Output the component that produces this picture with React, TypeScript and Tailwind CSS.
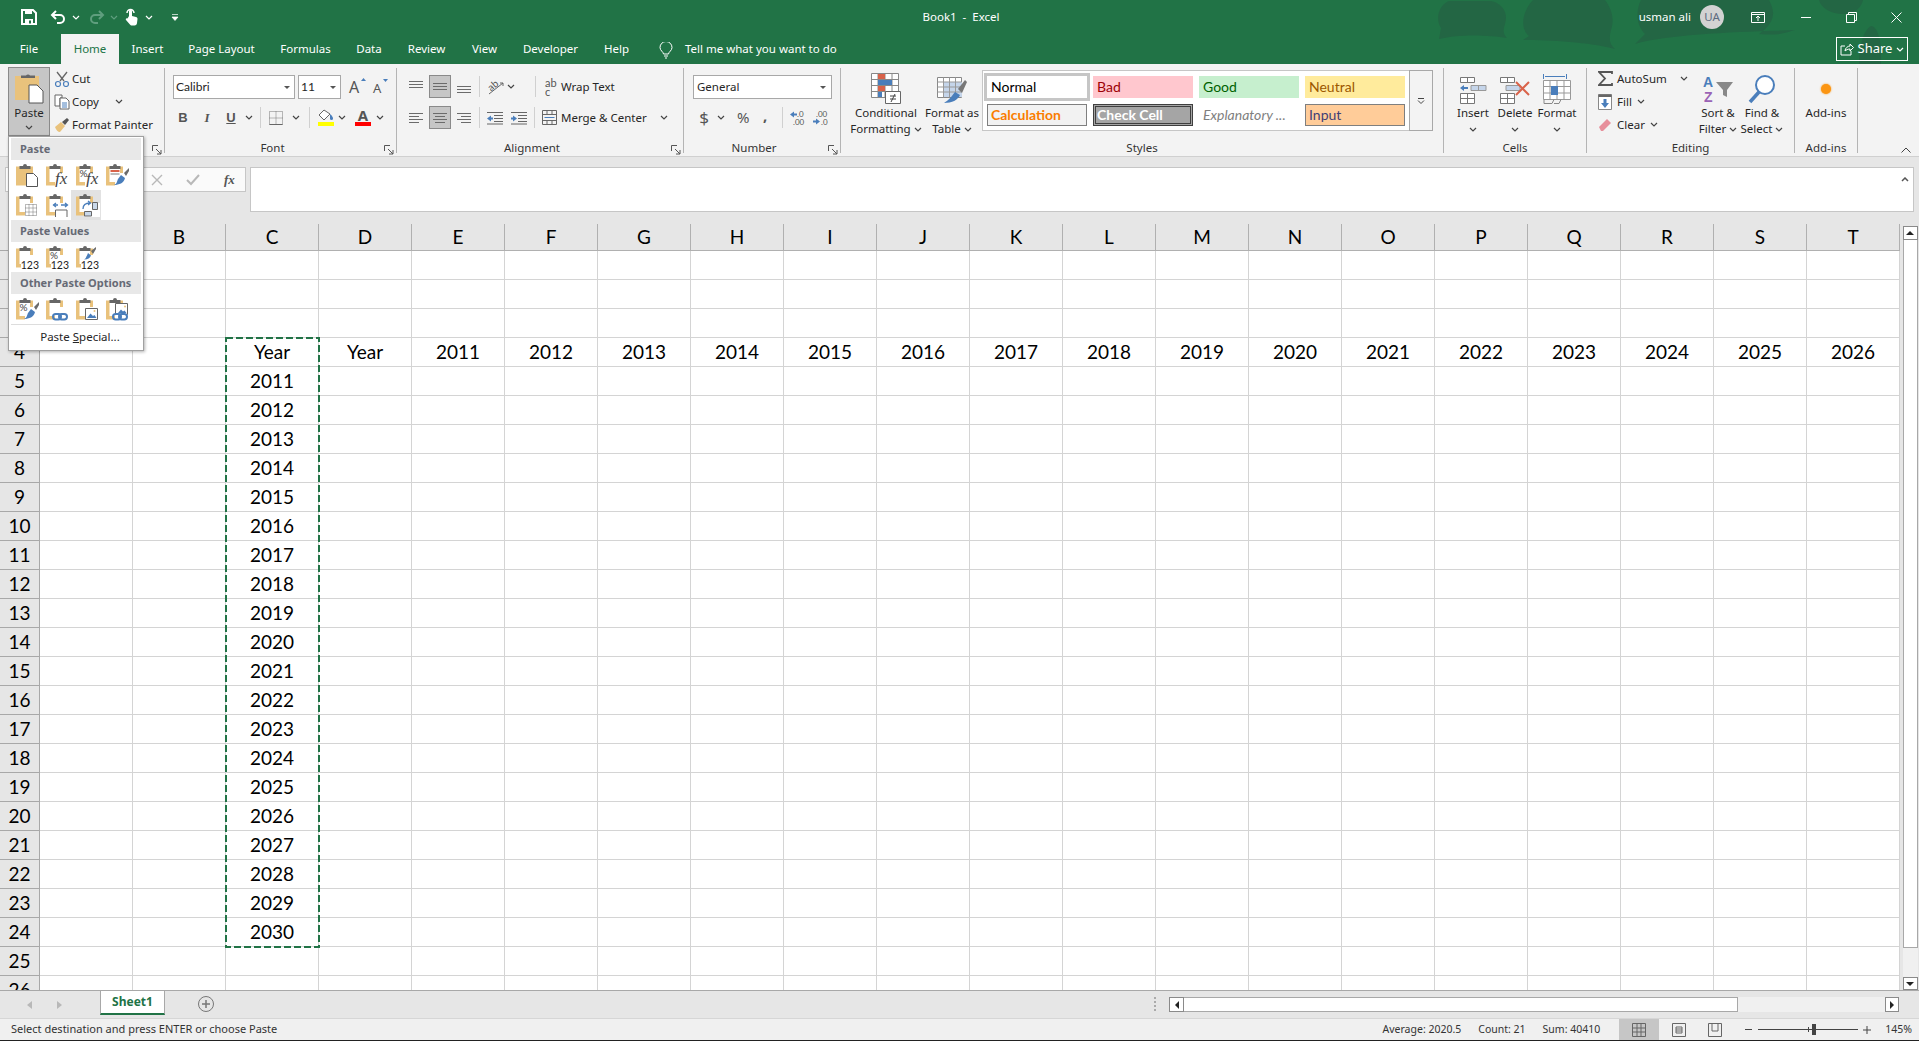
import type { ReactNode } from "react";

const GRAY = "#666666";
const BLUE = "#4a7ebb";
const TAN = "#e9c27c";
const RED = "#d9634a";

const columns = "ABCDEFGHIJKLMNOPQRST".split("");
const rows = Array.from({ length: 26 }, (_, i) => i + 1);

// what sits in the sheet, keyed by column + row
const cellValues: Record<string, string> = { C4: "Year", D4: "Year" };
columns.slice(4).forEach((col, i) => {
  cellValues[`${col}4`] = String(2011 + i);
});
for (let i = 0; i < 20; i++) {
  cellValues[`C${5 + i}`] = String(2011 + i);
}

const Chevron = ({ className = "", color = "#444444" }: { className?: string; color?: string }) => (
  <svg width="8" height="5" viewBox="0 0 8 5" className={`shrink-0 ${className}`}>
    <path d="M1 1l3 3 3-3" fill="none" stroke={color} strokeWidth="1.2" />
  </svg>
);

const Launcher = () => (
  <svg width="10" height="10" viewBox="0 0 10 10">
    <path d="M.5 6V.5H6M4 4l5 5M9 5v4H5" fill="none" stroke="#555555" />
  </svg>
);

const Sep = ({ className = "" }: { className?: string }) => (
  <div className={`w-px h-[21px] bg-[#d0d0d0] shrink-0 ${className}`} />
);

const Group = ({
  className,
  label,
  launcher,
  children,
}: {
  className: string;
  label: string;
  launcher?: boolean;
  children: ReactNode;
}) => (
  <div className={`flex flex-col h-[85px] border-r border-[#b4b4b4] shrink-0 ${className}`}>
    <div className="h-[73px] shrink-0">{children}</div>
    <div
      className={`relative h-[13px] shrink-0 flex items-center justify-center text-[11.5px] leading-none text-[#333333] ${
        launcher ? "pr-[16px]" : ""
      }`}
    >
      {label}
      {launcher && (
        <span className="absolute right-[2px] bottom-[-1px]">
          <Launcher />
        </span>
      )}
    </div>
  </div>
);

const BigButton = ({
  className,
  icon,
  lines,
  chevronBelow,
}: {
  className: string;
  icon: ReactNode;
  lines: string[];
  chevronBelow?: boolean;
}) => (
  <div className={`flex flex-col items-center shrink-0 pt-1 ${className}`}>
    <div className="h-[33px] flex items-center justify-center">{icon}</div>
    {lines.map((line, i) => (
      <div key={line} className="h-[16px] leading-[16px] whitespace-nowrap flex items-center gap-[3px] text-[11.5px]">
        {line}
        {!chevronBelow && i === lines.length - 1 && lines.length > 1 && <Chevron />}
      </div>
    ))}
    {chevronBelow && (
      <div className="h-[16px] flex items-center">
        <Chevron />
      </div>
    )}
  </div>
);

const LinesIcon = ({ d }: { d: string }) => (
  <svg width="16" height="14" viewBox="0 0 16 14">
    <path d={d} fill="none" stroke="#6b6b6b" />
  </svg>
);

const AlignCell = ({ d, on }: { d: string; on?: boolean }) => (
  <div className="w-[24px] h-[23px] flex items-center justify-center">
    <div
      className={`w-[22px] h-[23px] flex items-center justify-center border ${
        on ? "bg-[#c6c6c6] border-[#8a8a8a]" : "border-transparent"
      }`}
    >
      <LinesIcon d={d} />
    </div>
  </div>
);

const StyleCell = ({ className, children }: { className: string; children: ReactNode }) => (
  <div className={`h-[22px] flex items-center pb-[2px] text-[14px] whitespace-nowrap font-['Lato',sans-serif] ${className}`}>
    {children}
  </div>
);

// clipboard base used by every entry of the paste menu
const Clip = ({ solid, children }: { solid?: boolean; children?: ReactNode }) => (
  <svg width="24" height="24" viewBox="0 0 24 24" className="ml-[4px]">
    <path d="M0 3.500h17v19H0z" fill={TAN} />
    {!solid && <path d="M3.500 6h10.500v13H3.500z" fill="#ffffff" />}
    {!solid && <path d="M9 10h15v14H9z" fill="#ffffff" />}
    <path d="M3.500 6V3h3.500a2 2 0 0 1 4 0h3.500v3z" fill={GRAY} />
    {children}
  </svg>
);

const Page = () => <path d="M10.500 10.500h7l4 4v9H10.500z" fill="#ffffff" stroke="#555555" />;
const Brush = () => (
  <g>
    <path d="M18 10l5-5v3l-3 5z" fill="#6b6b6b" />
    <path d="M15 12l4 3c-1 5-6 7-11 7 3-1 3-4 4-6z" fill={BLUE} />
  </g>
);
const LinkIcon = () => (
  <g fill="none" stroke={BLUE} strokeWidth="2">
    <rect x="7" y="17" width="8" height="5.500" rx="2.700" />
    <rect x="13" y="17" width="8" height="5.500" rx="2.700" />
  </g>
);
const Picture = () => (
  <g>
    <path d="M9.500 11.500h12v11h-12z" fill="#ffffff" stroke="#666666" />
    <path d="M11 21l3.500-4.500 2.500 2.500 1.500-1 2 3z" fill={BLUE} />
    <circle cx="18.500" cy="14" r="1" fill={TAN} />
  </g>
);
const Num = () => (
  <g>
    <path d="M5 15h19v9H5z" fill="#ffffff" />
    <text x="23" y="23.500" textAnchor="end" fontSize="10.500" fontFamily="Lato, sans-serif" fill="#222222">
      123
    </text>
  </g>
);
const Fx = ({ x = 9 }: { x?: number }) => (
  <text x={x} y="21" fontSize="17" fontStyle="italic" fontFamily="Liberation Serif, serif" fill="#444444">
    fx
  </text>
);

const pasteRow1: ReactNode[] = [
  <Clip solid key="p"><Page /></Clip>,
  <Clip key="f"><Fx /></Clip>,
  <Clip key="pf">
    <text x="3.500" y="14" fontSize="10" fontFamily="Lato, sans-serif" fill="#444444">%</text>
    <Fx x={10} />
  </Clip>,
  <Clip key="fb">
    <path d="M4.500 7h9v2h-9z" fill="#d9634a" />
    <path d="M4.500 10h9v2h-9z" fill="#bbbbbb" />
    <Brush />
  </Clip>,
];

const pasteRow2: ReactNode[] = [
  <Clip key="nb">
    <path d="M9.500 11.500h11v11h-11zM13 11.500v11M17 11.500v11M9.500 15h11M9.500 19h11" fill="#ffffff" stroke="#777777" strokeDasharray="1 1" />
  </Clip>,
  <Clip key="kw">
    <path d="M7 12h5m-2-2l-2.500 2 2.500 2M15 12h6m-2-2l2.500 2-2.500 2" fill="none" stroke={BLUE} strokeWidth="1.300" />
    <path d="M9.500 24v-7h11.500v7" fill="#ffffff" stroke="#666666" />
  </Clip>,
  <Clip key="tr">
    <path d="M16.500 9.500h5v7h-5z" fill="#c9d8ea" stroke="#666666" />
    <path d="M8.500 18.500h7v4.500h-7z" fill="#c9d8ea" stroke="#666666" />
    <path d="M7 16c0-4 3-6 7-6m-2-2l2.500 2-2.500 2" fill="none" stroke={BLUE} strokeWidth="1.300" />
  </Clip>,
];

const pasteValues: ReactNode[] = [
  <Clip key="v"><Num /></Clip>,
  <Clip key="vp">
    <text x="4" y="14" fontSize="10" fontFamily="Lato, sans-serif" fill="#444444">%</text>
    <Num />
  </Clip>,
  <Clip key="vb">
    <path d="M15 6l5-4v2l-3 5z" fill="#6b6b6b" />
    <path d="M12 8l3 2.500c-1 2.500-3 4-7 4 2-1 2-2.500 3-4z" fill={BLUE} />
    <Num />
  </Clip>,
];

const pasteOther: ReactNode[] = [
  <Clip key="o1">
    <text x="3.500" y="14" fontSize="10" fontFamily="Lato, sans-serif" fill="#444444">%</text>
    <Brush />
  </Clip>,
  <Clip key="o2"><LinkIcon /></Clip>,
  <Clip key="o3"><Picture /></Clip>,
  <Clip key="o4">
    <path d="M9.500 6.500h12v11h-12z" fill="#ffffff" stroke="#666666" />
    <path d="M12 16l3-3.500 2 2 1.500-1 2 2.500z" fill={BLUE} />
    <circle cx="19" cy="9.500" r="1" fill={TAN} />
    <LinkIcon />
  </Clip>,
];

const MenuHeader = ({ children }: { children: ReactNode }) => (
  <div className="h-[22px] mx-[2px] bg-[#e8e8e8] flex items-center pl-[9px] text-[11px] font-bold text-[#666a75] whitespace-nowrap">
    {children}
  </div>
);

const MenuRow = ({ icons, selected }: { icons: ReactNode[]; selected?: number }) => (
  <div className="flex h-[30px] mx-[2px]">
    {icons.map((icon, i) => (
      <div key={i} className={`w-[30px] h-[30px] flex items-center justify-center ${selected === i ? "bg-[#e2e2e2]" : ""}`}>
        {icon}
      </div>
    ))}
  </div>
);

const PasteMenu = () => (
  <div className="absolute left-[8px] top-[136px] w-[136px] h-[215px] z-20 bg-white border border-[#a0a0a0] shadow-[1px_1px_3px_rgba(0,0,0,0.3)] pt-[1px] text-[#262626]">
    <MenuHeader>Paste</MenuHeader>
    <MenuRow icons={pasteRow1} />
    <MenuRow icons={pasteRow2} selected={2} />
    <MenuHeader>Paste Values</MenuHeader>
    <MenuRow icons={pasteValues} />
    <MenuHeader>Other Paste Options</MenuHeader>
    <MenuRow icons={pasteOther} />
    <div className="h-px mx-[2px] bg-[#dddddd]" />
    <div className="h-[24px] flex items-center justify-center pl-[8px] text-[11.5px]">
      <span>
        Paste <span className="underline">S</span>pecial...
      </span>
    </div>
  </div>
);

const TitleBar = () => (
  <div className="relative h-[34px] grid grid-cols-[1fr_auto_1fr] items-center text-white">
    <div className="relative flex items-center h-full">
      <svg width="16" height="16" viewBox="0 0 16 16" className="ml-[21px]">
        <path d="M1 1h11l3 3v11H1z" fill="none" stroke="#fff" strokeWidth="2" />
        <path d="M4 1h7v4H4zM4 10h8v5H4z" fill="#fff" />
        <path d="M8 11.500h2v3H8z" fill="#217346" />
      </svg>
      <svg width="16" height="14" viewBox="0 0 16 14" className="ml-[13px]">
        <path d="M6 1L2 5l4 4M2 5h8a4 4 0 0 1 0 8H7" fill="none" stroke="#fff" strokeWidth="2" />
      </svg>
      <Chevron color="#ffffff" className="ml-[6px]" />
      <svg width="16" height="14" viewBox="0 0 16 14" className="ml-[9px]">
        <path d="M10 1l4 4-4 4M14 5H6a4 4 0 0 0 0 8h3" fill="none" stroke="#5f9e7e" strokeWidth="2" />
      </svg>
      <Chevron color="#5f9e7e" className="ml-[5px]" />
      <svg width="13" height="18" viewBox="0 0 13 18" className="ml-[7px]">
        <path d="M4 8V3a1.500 1.500 0 0 1 3 0v5l4 1c1 .3 1.500 1 1.500 2l-.5 4c-.1 1.500-1 2.500-2.500 2.500H7c-1 0-1.700-.5-2.300-1.300L1 12c-.7-1 .5-2.300 1.500-1.500z" fill="#fff" />
        <path d="M2 5a3.500 3.500 0 0 1 7 0" fill="none" stroke="#fff" strokeWidth="1.500" />
      </svg>
      <Chevron color="#ffffff" className="ml-[7px]" />
      <svg width="8" height="7" viewBox="0 0 8 7" className="ml-[18px]">
        <path d="M1 .5h6M1 3h6L4 6.500z" fill="#fff" stroke="#fff" strokeWidth="0.700" />
      </svg>
    </div>
    <div className="text-[11.5px] whitespace-pre pl-[3px]">Book1  -  Excel</div>
    <div className="relative flex items-center justify-end h-full">
      <span className="text-[11.5px]">usman ali</span>
      <div className="ml-[9px] w-[24px] h-[24px] rounded-full bg-[#d2d2d2] flex items-center justify-center text-[11.5px] text-[#5d6b80]">
        UA
      </div>
      <svg width="14" height="11" viewBox="0 0 14 11" className="ml-[27px]">
        <path d="M.5 .5h13v10H.5zM.5 2.500h13M7 9V4.500M5 6l2-2 2 2" fill="none" stroke="#fff" />
      </svg>
      <div className="ml-[36px] w-[10px] h-px bg-white" />
      <svg width="11" height="11" viewBox="0 0 11 11" className="ml-[35px]">
        <path d="M.5 2.500h8v8h-8zM2.500 2.500v-2h8v8h-2" fill="none" stroke="#fff" />
      </svg>
      <svg width="11" height="11" viewBox="0 0 11 11" className="ml-[34px] mr-[17px]">
        <path d="M.5 .5l10 10M10.500 .5l-10 10" fill="none" stroke="#fff" />
      </svg>
    </div>
  </div>
);

const tabs = [
  { label: "File", cls: "w-[58px] mr-[3px]" },
  { label: "Home", cls: "w-[58px] bg-[#f3f3f3] text-[#217346]" },
  { label: "Insert", cls: "w-[57px]" },
  { label: "Page Layout", cls: "w-[91px]" },
  { label: "Formulas", cls: "w-[77px]" },
  { label: "Data", cls: "w-[50px]" },
  { label: "Review", cls: "w-[65px]" },
  { label: "View", cls: "w-[51px]" },
  { label: "Developer", cls: "w-[81px]" },
  { label: "Help", cls: "w-[51px]" },
];

const TabRow = () => (
  <div className="relative h-[30px] flex text-white text-[11.5px]">
    {tabs.map((t) => (
      <div key={t.label} className={`h-full flex items-center justify-center ${t.cls}`}>
        {t.label}
      </div>
    ))}
    <svg width="14" height="17" viewBox="0 0 14 17" className="ml-[17px] mt-[8px]">
      <path d="M4.500 12c0-2-3.500-3.500-3.500-6.500a6 6 0 0 1 12 0C13 8.500 9.500 10 9.500 12zM5 14h4M6 16h2" fill="none" stroke="#fff" />
    </svg>
    <div className="ml-[12px] flex items-center">Tell me what you want to do</div>
    <div className="absolute right-[11px] top-[3px] w-[72px] h-[24px] border border-white flex items-center justify-center gap-[4px] text-[13px]">
      <svg width="14" height="14" viewBox="0 0 14 14">
        <path d="M5 4H1v9h10V9M5 9c0-3 3-5 5-5V2l3.500 3.500L10 9V7C8 7 6 8 5 9z" fill="none" stroke="#fff" />
      </svg>
      Share
      <Chevron color="#ffffff" />
    </div>
  </div>
);

const Clipboard = () => (
  <Group className="w-[165px]" label="" launcher>
    <div className="flex pl-[8px] -mt-[1px]">
      <div className="w-[42px] h-[69px] bg-[#c6c6c6] border border-[#8a8a8a] flex flex-col items-center pt-[4px]">
        <svg width="30" height="32" viewBox="0 0 30 32">
          <path d="M1 4h24v24H1z" fill={TAN} />
          <path d="M7 6V3.500h5a2.500 2.500 0 0 1 4 0h5V6z" fill={GRAY} />
          <path d="M15 13h8l6 6v12H15z" fill="#ffffff" stroke="#555555" />
        </svg>
        <div className="text-[11.5px] leading-[16px] mt-[1px]">Paste</div>
        <Chevron className="mt-[4px]" />
      </div>
      <div className="ml-[4px] flex flex-col text-[11.5px]">
        <div className="h-[23px] flex items-center gap-[2px]">
          <svg width="16" height="16" viewBox="0 0 16 16">
            <path d="M3 1l7 9M13 1L6 10" fill="none" stroke="#666" strokeWidth="1.300" />
            <circle cx="4" cy="13" r="2.500" fill="none" stroke={BLUE} strokeWidth="1.200" />
            <circle cx="12" cy="13" r="2.500" fill="none" stroke={BLUE} strokeWidth="1.200" />
          </svg>
          Cut
        </div>
        <div className="h-[23px] flex items-center gap-[2px]">
          <svg width="16" height="16" viewBox="0 0 16 16">
            <path d="M1 1h7v3h-2v8H1z" fill="#fff" stroke="#666" />
            <path d="M6 4h6l3 3v8H6z" fill="#fff" stroke="#666" />
            <path d="M8 9h5M8 11h5M8 13h5" stroke={BLUE} />
          </svg>
          Copy
          <Chevron className="ml-[14px]" />
        </div>
        <div className="h-[23px] flex items-center gap-[2px]">
          <svg width="16" height="16" viewBox="0 0 16 16">
            <path d="M1 10l6-5 4 4-5 6c-2 0-4-2-5-5z" fill={TAN} />
            <path d="M8 5l5-4 2 2-4 5z" fill="#555" />
          </svg>
          Format Painter
        </div>
      </div>
    </div>
  </Group>
);

const FontGroup = () => (
  <Group className="w-[232px]" label="Font" launcher>
    <div className="flex items-center pl-[8px] pt-[7px]">
      <div className="w-[122px] h-[24px] bg-white border border-[#a8a8a8] flex items-center justify-between pl-[2px] pr-[4px] font-['Lato',sans-serif] text-[12px]">
        Calibri
        <svg width="6" height="3" viewBox="0 0 6 3"><path d="M0 0h6L3 3z" fill="#555" /></svg>
      </div>
      <div className="ml-[3px] w-[43px] h-[24px] bg-white border border-[#a8a8a8] flex items-center justify-between pl-[2px] pr-[4px] font-['Lato',sans-serif] text-[12px]">
        11
        <svg width="6" height="3" viewBox="0 0 6 3"><path d="M0 0h6L3 3z" fill="#555" /></svg>
      </div>
      <div className="ml-[8px] w-[14px] relative text-[16px] text-[#555555] leading-none">
        A
        <svg width="5" height="3" viewBox="0 0 5 3" className="absolute right-[-3px] top-[-1px]"><path d="M0 3h5L2.500 0z" fill={BLUE} /></svg>
      </div>
      <div className="ml-[10px] w-[12px] relative text-[13px] text-[#555555] leading-none mt-[2px]">
        A
        <svg width="5" height="3" viewBox="0 0 5 3" className="absolute right-[-3px] top-[-3px]"><path d="M0 0h5L2.500 3z" fill={BLUE} /></svg>
      </div>
    </div>
    <div className="flex items-center pl-[6px] mt-[8px] h-[21px] text-[#555555] text-[13px]">
      <div className="w-[24px] text-center font-bold font-['Liberation_Sans',sans-serif]">B</div>
      <div className="w-[24px] text-center italic font-['Liberation_Serif',serif] font-bold">I</div>
      <div className="w-[24px] text-center font-bold underline font-['Liberation_Sans',sans-serif]">U</div>
      <Chevron className="ml-[2px]" />
      <Sep className="ml-[7px]" />
      <svg width="14" height="14" viewBox="0 0 14 14" className="ml-[8px]">
        <path d="M.5 .5h13v13H.5zM7 .5v13M.5 7h13" fill="none" stroke="#777" strokeDasharray="1 1" />
        <path d="M.5 13.500h13" stroke="#666" />
      </svg>
      <Chevron className="ml-[9px]" />
      <Sep className="ml-[9px]" />
      <div className="ml-[8px] w-[16px] flex flex-col items-center">
        <svg width="16" height="13" viewBox="0 0 16 13">
          <path d="M6 1L1 6l5 5 6-6z" fill="#fff" stroke="#666" />
          <path d="M12 5c2 2 3 3 3 4.500a1.500 1.500 0 0 1-3 0z" fill={BLUE} />
        </svg>
        <div className="w-[16px] h-[4px] bg-[#ffff00]" />
      </div>
      <Chevron className="ml-[4px]" />
      <div className="ml-[9px] w-[16px] flex flex-col items-center leading-none text-[15px] font-bold">
        <span className="h-[13px] leading-[13px]">A</span>
        <div className="w-[16px] h-[4px] bg-[#ff0000]" />
      </div>
      <Chevron className="ml-[5px]" />
    </div>
  </Group>
);

const AlignmentGroup = () => (
  <Group className="w-[287px]" label="Alignment" launcher>
    <div className="flex items-center h-[23px] mt-[7px] pl-[7px]">
      <AlignCell d="M1 1.500h14M1 4.500h14M1 7.500h14" />
      <AlignCell on d="M1 3.500h14M1 6.500h14M1 9.500h14" />
      <AlignCell d="M1 6.500h14M1 9.500h14M1 12.500h14" />
      <Sep className="ml-[3px]" />
      <svg width="18" height="18" viewBox="0 0 18 18" className="ml-[7px]">
        <path d="M2 16L16 5m-3 0h3v3" fill="none" stroke="#666" />
        <text x="1" y="11" fontSize="10" transform="rotate(-40 6 8)" fill="#555" fontFamily="Lato, sans-serif">ab</text>
      </svg>
      <Chevron className="ml-[2px]" />
      <Sep className="ml-[20px]" />
      <div className="ml-[9px] w-[13px] text-[11px] leading-[9px] text-[#555555] font-['Lato',sans-serif]">
        ab
        <br />c
      </div>
      <span className="ml-[3px] text-[11.5px]">Wrap Text</span>
    </div>
    <div className="flex items-center h-[23px] mt-[8px] pl-[7px]">
      <AlignCell d="M1 2.500h14M1 5.500h10M1 8.500h14M1 11.500h10" />
      <AlignCell on d="M1 2.500h14M3 5.500h10M1 8.500h14M3 11.500h10" />
      <AlignCell d="M1 2.500h14M5 5.500h10M1 8.500h14M5 11.500h10" />
      <Sep className="ml-[3px]" />
      <svg width="16" height="14" viewBox="0 0 16 14" className="ml-[7px]">
        <path d="M7 4.500h9M7 7.500h9M7 10.500h9M0 1.500h16M0 13h16" fill="none" stroke="#666" />
        <path d="M0 7.500l4-3v2h2v2H4v2z" fill={BLUE} />
      </svg>
      <svg width="16" height="14" viewBox="0 0 16 14" className="ml-[8px]">
        <path d="M7 4.500h9M7 7.500h9M7 10.500h9M0 1.500h16M0 13h16" fill="none" stroke="#666" />
        <path d="M6 7.500l-4-3v2H0v2h2v2z" fill={BLUE} />
      </svg>
      <Sep className="ml-[7px]" />
      <svg width="15" height="15" viewBox="0 0 15 15" className="ml-[7px]">
        <path d="M.5 .5h14v14H.5zM.5 4.500h14M.5 10.500h14M5 .5v4M10 .5v4M5 10.500v4M10 10.500v4" fill="none" stroke="#666" />
        <path d="M2.500 7.500h10" stroke={BLUE} />
      </svg>
      <span className="ml-[4px] text-[11.5px]">Merge &amp; Center</span>
      <Chevron className="ml-auto mr-[15px]" />
    </div>
  </Group>
);

const NumberGroup = () => (
  <Group className="w-[157px]" label="Number" launcher>
    <div className="pl-[9px] pt-[7px]">
      <div className="w-[139px] h-[24px] bg-white border border-[#a8a8a8] flex items-center justify-between pl-[3px] pr-[5px] text-[11.5px]">
        General
        <svg width="6" height="3" viewBox="0 0 6 3"><path d="M0 0h6L3 3z" fill="#555" /></svg>
      </div>
    </div>
    <div className="flex items-center h-[21px] mt-[8px] pl-[14px] text-[#555555]">
      <span className="w-[12px] text-center text-[17px]">$</span>
      <Chevron className="ml-[7px]" />
      <span className="ml-[12px] w-[13px] text-[15px]">%</span>
      <span className="ml-[13px] w-[6px] text-[15px] font-bold leading-none -mt-[4px]">,</span>
      <Sep className="ml-[13px]" />
      <svg width="15" height="16" viewBox="0 0 15 16" className="ml-[7px]">
        <path d="M0 4.500l4-3v2h3v2H4v2z" fill={BLUE} />
        <text x="7" y="7" fontSize="8" fill="#555" fontFamily="Lato, sans-serif">.0</text>
        <text x="3" y="15" fontSize="8" fill="#555" fontFamily="Lato, sans-serif">.00</text>
      </svg>
      <svg width="15" height="16" viewBox="0 0 15 16" className="ml-[8px]">
        <text x="3" y="7" fontSize="8" fill="#555" fontFamily="Lato, sans-serif">.00</text>
        <path d="M7 11.500l-4-3v2H0v2h3v2z" fill={BLUE} />
        <text x="8" y="15" fontSize="8" fill="#555" fontFamily="Lato, sans-serif">.0</text>
      </svg>
    </div>
  </Group>
);

const StylesGroup = () => (
  <Group className="w-[603px]" label="Styles">
    <div className="flex pl-[7px]">
      <BigButton
        className="w-[76px]"
        lines={["Conditional", "Formatting"]}
        icon={
          <svg width="30" height="31" viewBox="0 0 30 31">
            <path d="M.5 .5h27v24H.5zM7 .5v24M14 .5v24M21 .5v24M.5 6.500h27M.5 12.500h27M.5 18.500h27" fill="#fff" stroke="#888" />
            <path d="M7 1h7v5H7zM7 13h7v5H7z" fill={RED} />
            <path d="M7 7h14v5H7z" fill={BLUE} />
            <path d="M7 19h4v5H7z" fill={BLUE} />
            <path d="M14.500 18.500h15v12h-15z" fill="#fff" stroke="#666" />
            <path d="M19 23h6M19 26h6M24 21l-4 8" fill="none" stroke="#444" />
          </svg>
        }
      />
      <BigButton
        className="w-[56px]"
        lines={["Format as", "Table"]}
        icon={
          <svg width="30" height="30" viewBox="0 0 30 30">
            <path d="M.5 3.500h24v20H.5z" fill="#fff" stroke="#888" />
            <path d="M7 8h18v15H7z" fill="#c5d5ea" />
            <path d="M.5 8h24M.5 13h24M.5 18h24M6.500 3.500v20M12.500 3.500v20M18.500 3.500v20" fill="none" stroke="#999" />
            <path d="M21 15l7-9 2 2-5 11z" fill="#777" />
            <path d="M18 18l5 3c-2 5-8 8-16 8 5-3 7-6 11-11z" fill={BLUE} />
          </svg>
        }
      />
      <div className="ml-[2px] mt-[2px] flex h-[61px]">
        <div className="w-[427px] bg-white border border-[#c6c6c6] border-r-0 pl-[4px] pt-[5px] grid grid-cols-[100px_100px_100px_100px] gap-x-[6px] gap-y-[6px] content-start">
          <StyleCell className="pl-1 ring-[3px] ring-[#c6c6c6] bg-white text-black">Normal</StyleCell>
          <StyleCell className="pl-1 bg-[#ffc7ce] text-[#9c0006]">Bad</StyleCell>
          <StyleCell className="pl-1 bg-[#c6efce] text-[#006100]">Good</StyleCell>
          <StyleCell className="pl-1 bg-[#ffeb9c] text-[#9c5700]">Neutral</StyleCell>
          <StyleCell className="pl-[3px] bg-[#f2f2f2] border border-[#7f7f7f] text-[#fa7d00] font-bold">Calculation</StyleCell>
          <StyleCell className="pl-px bg-[#a5a5a5] border-[3px] border-double border-[#3f3f3f] text-white font-bold">Check Cell</StyleCell>
          <StyleCell className="pl-1 italic text-[#7f7f7f]">Explanatory ...</StyleCell>
          <StyleCell className="pl-[3px] bg-[#ffcc99] border border-[#7f7f7f] text-[#3f3f76]">Input</StyleCell>
        </div>
        <div className="w-[24px] border border-[#a8a8a8] flex items-center justify-center">
          <svg width="8" height="6" viewBox="0 0 8 6">
            <path d="M1 .5h6M1 2.500l3 3 3-3" fill="none" stroke="#444" />
          </svg>
        </div>
      </div>
    </div>
  </Group>
);

const CellsGroup = () => (
  <Group className="w-[143px]" label="Cells">
    <div className="flex pl-[8px]">
      <BigButton
        className="w-[42px]"
        lines={["Insert"]}
        chevronBelow
        icon={
          <svg width="28" height="30" viewBox="0 0 28 30">
            <path d="M1.500 3.500h14v5h-14zM8.500 3.500v5M1.500 19.500h14v10h-14zM1.500 24.500h14M8.500 19.500v10" fill="#fff" stroke="#777" />
            <path d="M12 11.500h15v5H12zM19.500 11.500v5" fill="#c5d5ea" stroke="#999" />
            <path d="M1 14l4-3v2h4v2H5v2z" fill={BLUE} />
          </svg>
        }
      />
      <BigButton
        className="w-[42px]"
        lines={["Delete"]}
        chevronBelow
        icon={
          <svg width="32" height="30" viewBox="0 0 32 30">
            <path d="M1.500 3.500h14v5h-14zM8.500 3.500v5M1.500 19.500h14v10h-14zM1.500 24.500h14M8.500 19.500v10" fill="#fff" stroke="#777" />
            <path d="M7 11.500h14v5H7z" fill="#c5d5ea" stroke="#999" />
            <path d="M17 8l13 13M30 8L17 21" fill="none" stroke={RED} strokeWidth="2" />
          </svg>
        }
      />
      <BigButton
        className="w-[42px]"
        lines={["Format"]}
        chevronBelow
        icon={
          <svg width="28" height="32" viewBox="0 0 28 32">
            <path d="M.5 1v5M23.500 1v5M2 3.500h20" fill="none" stroke={BLUE} />
            <path d="M.5 7.500h27v19H.5zM7 7.500v19M14 7.500v19M21 7.500v19M.5 13.500h27M.5 20h27" fill="#fff" stroke="#999" />
            <path d="M8 13h7v9H8z" fill={BLUE} />
            <path d="M1 26.500v4h8l2-4M11 30.500h5l2-4" fill="none" stroke="#888" />
          </svg>
        }
      />
    </div>
  </Group>
);

const EditingGroup = () => (
  <Group className="w-[208px]" label="Editing">
    <div className="flex">
      <div className="w-[109px] pl-[11px] -mt-[1px] text-[11.5px]">
        <div className="h-[23px] flex items-center gap-[4px]">
          <svg width="15" height="15" viewBox="0 0 15 15">
            <path d="M14 3V1H1l6 6.500L1 14h13v-2" fill="none" stroke="#555" strokeWidth="1.800" />
          </svg>
          AutoSum
          <Chevron className="ml-[9px]" />
        </div>
        <div className="h-[23px] flex items-center gap-[5px]">
          <svg width="14" height="16" viewBox="0 0 14 16">
            <path d="M.5 .5h13v15H.5z" fill="#fff" stroke="#888" />
            <path d="M.5 .5h13v2.500H.5z" fill="#666" />
            <path d="M5.500 5h3v4H11l-4 5-4-5h2.500z" fill={BLUE} />
          </svg>
          Fill
          <Chevron />
        </div>
        <div className="h-[23px] flex items-center gap-[5px]">
          <svg width="14" height="14" viewBox="0 0 14 14">
            <path d="M1 9l8-8 4 4-8 8H3z" fill="#e78f9b" />
          </svg>
          Clear
          <Chevron />
        </div>
      </div>
      <BigButton
        className="w-[44px]"
        lines={["Sort &", "Filter"]}
        icon={
          <svg width="30" height="29" viewBox="0 0 30 29">
            <text x="0" y="13" fontSize="14" fontWeight="bold" fill={BLUE} fontFamily="Liberation Sans, sans-serif">A</text>
            <text x="1" y="28" fontSize="14" fontWeight="bold" fill="#9a63b5" fontFamily="Liberation Sans, sans-serif">Z</text>
            <path d="M13 8h17l-6 8v7l-4-2v-5z" fill="#888" />
          </svg>
        }
      />
      <BigButton
        className="w-[44px]"
        lines={["Find &", "Select"]}
        icon={
          <svg width="28" height="30" viewBox="0 0 28 30">
            <circle cx="17" cy="11" r="9" fill="#fff" stroke={BLUE} strokeWidth="2" />
            <path d="M2 28l9-10" stroke={BLUE} strokeWidth="3.500" />
          </svg>
        }
      />
    </div>
  </Group>
);

const AddinsGroup = () => (
  <Group className="w-[63px]" label="Add-ins">
    <BigButton
      className="w-[62px]"
      lines={["Add-ins"]}
      icon={<div className="w-[10px] h-[10px] rounded-full bg-[#fb9512] shadow-[0_0_2px_#fb9512]" />}
    />
  </Group>
);

const Ribbon = () => (
  <div className="relative h-[93px] bg-[#f3f3f3] border-b border-[#d0d0d0] flex pt-[4px] text-[#262626]">
    <Clipboard />
    <FontGroup />
    <AlignmentGroup />
    <NumberGroup />
    <StylesGroup />
    <CellsGroup />
    <EditingGroup />
    <AddinsGroup />
    <svg width="10" height="6" viewBox="0 0 10 6" className="absolute right-[8px] bottom-[3px]">
      <path d="M.5 5.500L5 1l4.500 4.500" fill="none" stroke="#444" />
    </svg>
  </div>
);

const FormulaBar = () => (
  <div className="h-[67px] bg-[#e6e6e6] pt-[10px] pb-[12px] flex pl-[5px] pr-[5px]">
    <div className="w-[120px] h-[25px] bg-white border border-[#c6c6c6]" />
    <div className="ml-[5px] w-[116px] h-[25px] bg-[#fafafa] border border-[#c6c6c6] flex items-center">
      <svg width="12" height="12" viewBox="0 0 12 12" className="ml-[20px]">
        <path d="M1 1l10 10M11 1L1 11" stroke="#b8b8b8" strokeWidth="1.400" />
      </svg>
      <svg width="14" height="12" viewBox="0 0 14 12" className="ml-[23px]">
        <path d="M1 6l4 4 8-9" fill="none" stroke="#b8b8b8" strokeWidth="2" />
      </svg>
      <span className="ml-[24px] font-['Liberation_Serif',serif] italic font-bold text-[13px] text-[#555555]">fx</span>
    </div>
    <div className="relative ml-[4px] flex-1 h-[45px] bg-white border border-[#c6c6c6]">
      <svg width="8" height="5" viewBox="0 0 8 5" className="absolute right-[4px] top-[9px]">
        <path d="M1 4l3-3 3 3" fill="none" stroke="#555" strokeWidth="1.500" />
      </svg>
    </div>
  </div>
);

const Sheet = () => (
  <div className="relative w-[1900px] h-[766px] overflow-hidden bg-white">
    <div className="grid grid-cols-[40px_repeat(20,93px)] grid-rows-[27px] auto-rows-[29px] font-['Lato',sans-serif] text-[19px] text-black">
      <div className="bg-[#e6e6e6] border-r border-b border-[#a8a8a8]" />
      {columns.map((col) => (
        <div key={col} className="bg-[#e6e6e6] border-r border-b border-[#b0b0b0] flex items-center justify-center">
          {col}
        </div>
      ))}
      {rows.map((row) => (
        <div key={row} className="contents">
          <div className="bg-[#e6e6e6] border-r border-b border-[#a8a8a8] flex items-center justify-center pt-px">
            {row}
          </div>
          {columns.map((col) => (
            <div key={col} className="border-r border-b border-[#d4d4d4] flex items-center justify-center pt-px">
              {cellValues[`${col}${row}`]}
            </div>
          ))}
        </div>
      ))}
    </div>
    {/* copy marquee round C4:C24 */}
    <svg width="95" height="611" viewBox="0 0 95 611" className="absolute left-[225px] top-[113px]">
      <rect x="1" y="1" width="93" height="609" fill="none" stroke="#217346" strokeWidth="2" strokeDasharray="7 3" />
    </svg>
  </div>
);

const Triangle = ({ d }: { d: string }) => (
  <svg width="8" height="8" viewBox="0 0 8 8">
    <path d={d} fill="#222222" />
  </svg>
);

const VScroll = () => (
  <div className="w-[19px] h-[766px] bg-[#e6e6e6] flex flex-col items-center pt-[2px] pl-px">
    <div className="w-[15px] h-[14px] bg-white border border-[#8a8a8a] flex items-center justify-center shrink-0">
      <Triangle d="M0 6h8L4 2z" />
    </div>
    <div className="w-[15px] h-[708px] bg-white border border-t-0 border-[#a8a8a8] shrink-0" />
    <div className="flex-1 w-[15px] bg-[#f0f0f0]" />
    <div className="w-[15px] h-[13px] bg-white border border-[#8a8a8a] flex items-center justify-center shrink-0">
      <Triangle d="M0 2h8L4 6z" />
    </div>
  </div>
);

const SheetTabs = () => (
  <div className="h-[28px] bg-[#e6e6e6] border-t border-[#a8a8a8] flex text-[12px]">
    <svg width="6" height="8" viewBox="0 0 6 8" className="ml-[27px] mt-[10px]">
      <path d="M5 0v8L0 4z" fill="#b8b8b8" />
    </svg>
    <svg width="6" height="8" viewBox="0 0 6 8" className="ml-[23px] mt-[10px]">
      <path d="M1 0v8l5-4z" fill="#b8b8b8" />
    </svg>
    <div className="ml-[38px] -mt-px w-[65px] h-[25px] bg-white border-x border-t border-[#a8a8a8] border-b-2 border-b-[#217346] flex items-center justify-center font-bold text-[#217346]">
      Sheet1
    </div>
    <svg width="16" height="16" viewBox="0 0 16 16" className="ml-[33px] mt-[5px]">
      <circle cx="8" cy="8" r="7.500" fill="none" stroke="#777" />
      <path d="M8 4v8M4 8h8" stroke="#777" strokeWidth="1.500" />
    </svg>
    <div className="ml-[940px] mt-[6px] w-[2px] h-[14px] border-l-2 border-dotted border-[#aaaaaa]" />
    <div className="ml-[13px] mt-[6px] w-[15px] h-[15px] bg-white border border-[#8a8a8a] flex items-center justify-center">
      <Triangle d="M6 0v8L2 4z" />
    </div>
    <div className="mt-[6px] w-[554px] h-[15px] bg-white border border-l-0 border-[#a8a8a8]" />
    <div className="mt-[6px] w-[147px] h-[15px] bg-[#f0f0f0]" />
    <div className="mt-[6px] w-[14px] h-[15px] bg-white border border-[#8a8a8a] flex items-center justify-center">
      <Triangle d="M2 0v8l4-4z" />
    </div>
  </div>
);

const StatusBar = () => (
  <div className="h-[23px] bg-[#f0f0f0] border-t border-[#d6d6d6] border-b border-b-[#222222] flex items-center text-[10.5px] text-[#333333] pl-[11px]">
    <span className="text-[11px]">Select destination and press ENTER or choose Paste</span>
    <span className="ml-auto">Average: 2020.5</span>
    <span className="ml-[17px]">Count: 21</span>
    <span className="ml-[17px]">Sum: 40410</span>
    <div className="ml-[19px] w-[40px] h-full bg-[#c6c6c6] flex items-center justify-center">
      <svg width="14" height="14" viewBox="0 0 14 14">
        <path d="M.5 .5h13v13H.5zM5 .5v13M9 .5v13M.5 5h13M.5 9h13" fill="none" stroke="#666" />
      </svg>
    </div>
    <svg width="14" height="14" viewBox="0 0 14 14" className="ml-[13px]">
      <path d="M.5 .5h13v13H.5zM4 4h6v6H4zM4 6h6M4 8h6" fill="none" stroke="#666" />
    </svg>
    <svg width="14" height="14" viewBox="0 0 14 14" className="ml-[22px]">
      <path d="M.5 .5h13v13H.5zM4 .5V8h6V.5" fill="none" stroke="#666" />
    </svg>
    <div className="ml-[23px] w-[7px] h-px bg-[#444444]" />
    <div className="relative ml-[6px] w-[100px] h-px bg-[#444444]">
      <div className="absolute left-[50px] top-[-2px] w-px h-[5px] bg-[#444444]" />
      <div className="absolute left-[54px] top-[-5px] w-[4px] h-[11px] bg-[#444444]" />
    </div>
    <svg width="8" height="8" viewBox="0 0 8 8" className="ml-[5px]">
      <path d="M4 0v8M0 4h8" stroke="#444" />
    </svg>
    <span className="ml-[14px] mr-[7px]">145%</span>
  </div>
);

export default function App() {
  return (
    <div className="relative w-screen h-screen overflow-hidden bg-white font-['Noto_Sans',sans-serif]">
      <div className="relative bg-[#217346] h-[64px]">
        {/* darker speech-bubble pattern of the title bar */}
        <svg width="500" height="64" viewBox="0 0 500 64" className="absolute right-0 top-0">
          <path d="M30 1C20 5 16 18 22 28L20 39C40 34 70 35 88 38C84 34 84 30 86 24C90 12 82 3 72 1Z" fill="#236644" />
          <path d="M114 0C104 10 100 28 110 36L104 40C130 40 170 42 196 49C190 44 190 38 192 30C196 18 192 8 186 0Z" fill="#236644" />
          <path d="M222 0C216 12 218 26 226 34L216 44C250 34 320 32 376 30C368 32 362 36 340 34C360 20 354 8 350 0Z" fill="#236644" />
          <path d="M440 64C440 48 444 30 452 26C458 26 462 40 462 52L462 64Z" fill="#236644" />
          <path d="M400 0C402 8 412 14 424 14C436 14 442 8 444 0Z" fill="#236644" />
        </svg>
        <TitleBar />
        <TabRow />
      </div>
      <Ribbon />
      <FormulaBar />
      <div className="flex">
        <Sheet />
        <VScroll />
      </div>
      <SheetTabs />
      <StatusBar />
      <PasteMenu />
    </div>
  );
}
